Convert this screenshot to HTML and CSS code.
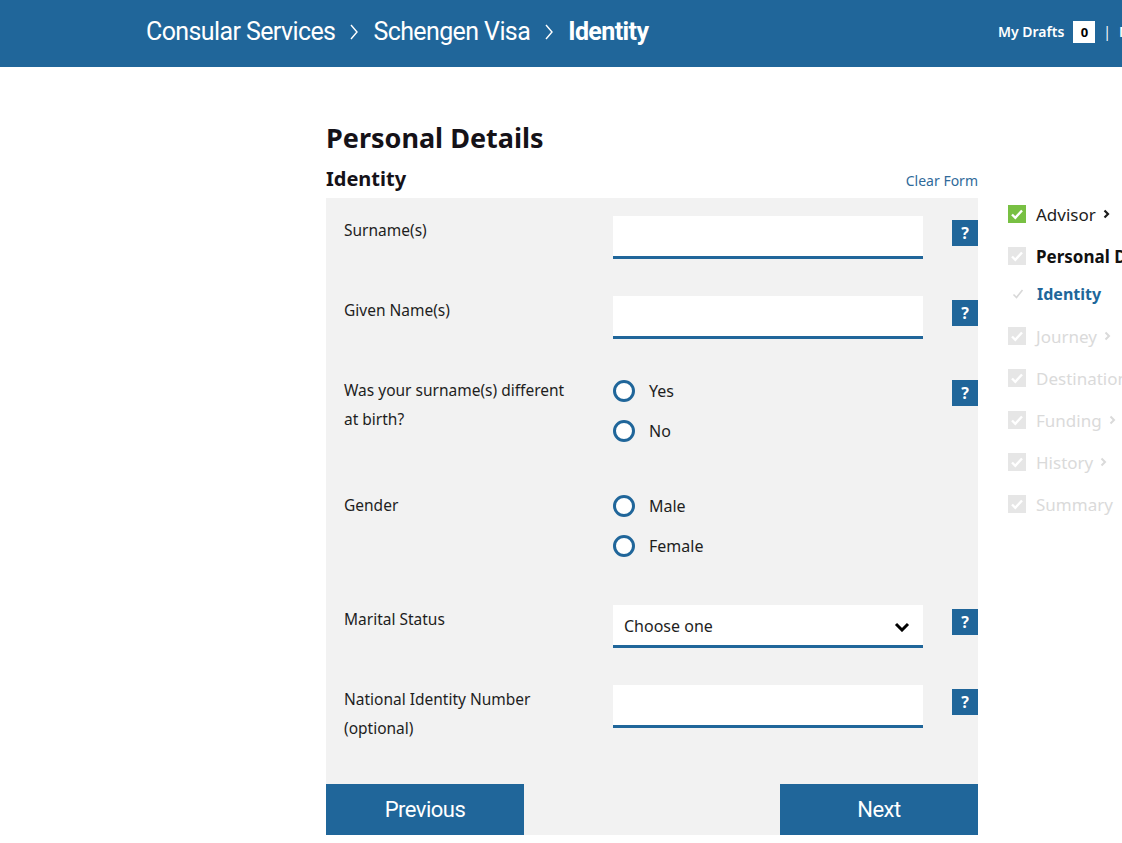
FILE: index.html
```html
<!DOCTYPE html>
<html lang="en">

<head>
    <meta charset="UTF-8">
    <meta name="viewport" content="width=device-width, initial-scale=1.0">
    <title>Identity - Schengen Visa</title>
    <link rel="stylesheet" href="styles.css">
</head>

<body>
    <header class="topbar">
        <nav class="crumbs">
            <a href="#">Consular Services</a>
            <svg class="crumb-sep" width="10" height="18" viewBox="0 0 10 18"><path d="M2 2l6 7-6 7" fill="none" stroke="#fff" stroke-width="1.4"/></svg>
            <a href="#">Schengen Visa</a>
            <svg class="crumb-sep" width="10" height="18" viewBox="0 0 10 18"><path d="M2 2l6 7-6 7" fill="none" stroke="#fff" stroke-width="1.4"/></svg>
            <strong>Identity</strong>
        </nav>
        <div class="account">
            <a href="#">My Drafts</a>
            <span class="count">0</span>
            <span class="divider">|</span>
            <a href="#">My Account</a>
        </div>
    </header>

    <main class="page">
        <section class="form-col">
            <h1>Personal Details</h1>
            <div class="form-head">
                <h2>Identity</h2>
                <a href="#" class="clear-link">Clear Form</a>
            </div>

            <form class="panel" id="identityForm">
                <div class="fields">
                    <div class="row">
                        <label for="surname">Surname(s)</label>
                        <div class="field"><input type="text" id="surname" name="surname"></div>
                        <button type="button" class="help">?</button>
                    </div>
                    <div class="row">
                        <label for="given">Given Name(s)</label>
                        <div class="field"><input type="text" id="given" name="given"></div>
                        <button type="button" class="help">?</button>
                    </div>
                    <div class="row">
                        <label>Was your surname(s) different at birth?</label>
                        <div class="radios">
                            <label class="radio"><input type="radio" name="birthname" value="yes"><span>Yes</span></label>
                            <label class="radio"><input type="radio" name="birthname" value="no"><span>No</span></label>
                        </div>
                        <button type="button" class="help">?</button>
                    </div>
                    <div class="row">
                        <label>Gender</label>
                        <div class="radios">
                            <label class="radio"><input type="radio" name="gender" value="m"><span>Male</span></label>
                            <label class="radio"><input type="radio" name="gender" value="f"><span>Female</span></label>
                        </div>
                    </div>
                    <div class="row">
                        <label for="marital">Marital Status</label>
                        <div class="field select-wrap">
                            <select id="marital" name="marital">
                                <option value="">Choose one</option>
                                <option>Single</option>
                                <option>Married</option>
                                <option>Divorced</option>
                                <option>Widowed</option>
                            </select>
                            <svg class="select-arrow" width="16" height="10" viewBox="0 0 16 10"><path d="M2 2l6 6 6-6" fill="none" stroke="#000" stroke-width="3"/></svg>
                        </div>
                        <button type="button" class="help">?</button>
                    </div>
                    <div class="row">
                        <label for="nin">National Identity Number (optional)</label>
                        <div class="field"><input type="text" id="nin" name="nin"></div>
                        <button type="button" class="help">?</button>
                    </div>
                </div>
                <div class="actions">
                    <button type="button" class="btn">Previous</button>
                    <button type="submit" class="btn">Next</button>
                </div>
            </form>
        </section>

        <aside class="steps">
            <ul>
                <li class="step done">
                    <svg class="tick-box" width="18" height="18" viewBox="0 0 18 18"><rect width="18" height="18" fill="#78c043"/><path d="M4 9.5l3.3 3.3L14 5.5" fill="none" stroke="#fff" stroke-width="2.4"/></svg>
                    Advisor
                    <svg class="more" width="7" height="10" viewBox="0 0 7 10"><path d="M1.5 1.5l3.5 3.5-3.5 3.5" fill="none" stroke="currentColor" stroke-width="2.2"/></svg>
                </li>
                <li class="step current">
                    <svg class="tick-box" width="18" height="18" viewBox="0 0 18 18"><rect width="18" height="18" fill="#e6e6e6"/><path d="M4 9.5l3.3 3.3L14 5.5" fill="none" stroke="#fff" stroke-width="2.4"/></svg>
                    Personal Details
                </li>
                <li class="substep">
                    <svg class="tick" width="12" height="12" viewBox="0 0 12 12"><path d="M1.5 6.5l3 3L10.5 2" fill="none" stroke="#d8d8d8" stroke-width="1.6"/></svg>
                    Identity
                </li>
                <li class="step todo">
                    <svg class="tick-box" width="18" height="18" viewBox="0 0 18 18"><rect width="18" height="18" fill="#e6e6e6"/><path d="M4 9.5l3.3 3.3L14 5.5" fill="none" stroke="#fff" stroke-width="2.4"/></svg>
                    Journey
                    <svg class="more" width="7" height="10" viewBox="0 0 7 10"><path d="M1.5 1.5l3.5 3.5-3.5 3.5" fill="none" stroke="currentColor" stroke-width="2"/></svg>
                </li>
                <li class="step todo">
                    <svg class="tick-box" width="18" height="18" viewBox="0 0 18 18"><rect width="18" height="18" fill="#e6e6e6"/><path d="M4 9.5l3.3 3.3L14 5.5" fill="none" stroke="#fff" stroke-width="2.4"/></svg>
                    Destination
                    <svg class="more" width="7" height="10" viewBox="0 0 7 10"><path d="M1.5 1.5l3.5 3.5-3.5 3.5" fill="none" stroke="currentColor" stroke-width="2"/></svg>
                </li>
                <li class="step todo">
                    <svg class="tick-box" width="18" height="18" viewBox="0 0 18 18"><rect width="18" height="18" fill="#e6e6e6"/><path d="M4 9.5l3.3 3.3L14 5.5" fill="none" stroke="#fff" stroke-width="2.4"/></svg>
                    Funding
                    <svg class="more" width="7" height="10" viewBox="0 0 7 10"><path d="M1.5 1.5l3.5 3.5-3.5 3.5" fill="none" stroke="currentColor" stroke-width="2"/></svg>
                </li>
                <li class="step todo">
                    <svg class="tick-box" width="18" height="18" viewBox="0 0 18 18"><rect width="18" height="18" fill="#e6e6e6"/><path d="M4 9.5l3.3 3.3L14 5.5" fill="none" stroke="#fff" stroke-width="2.4"/></svg>
                    History
                    <svg class="more" width="7" height="10" viewBox="0 0 7 10"><path d="M1.5 1.5l3.5 3.5-3.5 3.5" fill="none" stroke="currentColor" stroke-width="2"/></svg>
                </li>
                <li class="step todo">
                    <svg class="tick-box" width="18" height="18" viewBox="0 0 18 18"><rect width="18" height="18" fill="#e6e6e6"/><path d="M4 9.5l3.3 3.3L14 5.5" fill="none" stroke="#fff" stroke-width="2.4"/></svg>
                    Summary
                </li>
            </ul>
        </aside>
    </main>
</body>

</html>
```

FILE: styles.css
```css
html,
body {
    overflow: hidden;
}

body {
    margin: 0;
    background-color: #ffffff;
    color: #1c1c1c;
    font-family: "Noto Sans", "Open Sans", sans-serif;
    font-size: 16px;
}

/* top bar with breadcrumb */
.topbar {
    box-sizing: border-box;
    display: flex;
    align-items: center;
    height: 67px;
    padding: 0 0 4px 146px;
    background-color: #20669a;
    color: #ffffff;
    white-space: nowrap;
}

.crumbs {
    flex: 0 0 852px;
    display: flex;
    align-items: center;
    gap: 14px;
    font-family: "Roboto", sans-serif;
    font-size: 25px;
    letter-spacing: -0.6px;
}

.crumbs a {
    color: #ffffff;
    text-decoration: none;
}

.crumbs strong {
    font-weight: bold;
}

.account {
    display: flex;
    align-items: center;
    font-size: 14px;
    font-weight: 600;
}

.account a {
    color: #ffffff;
    text-decoration: none;
}

.account .count {
    width: 22px;
    height: 22px;
    margin-left: 9px;
    background-color: #ffffff;
    color: #000000;
    font-size: 13px;
    font-weight: bold;
    line-height: 22px;
    text-align: center;
}

.account .divider {
    margin: 0 8px;
    font-weight: normal;
}

/* page body */
.page {
    display: grid;
    grid-template-columns: 652px auto;
    column-gap: 30px;
    padding: 53px 0 0 326px;
    white-space: nowrap;
}

h1 {
    margin: 0;
    font-size: 27px;
    line-height: 36px;
    color: #151218;
}

.form-head {
    display: flex;
    justify-content: space-between;
    align-items: baseline;
    margin: 8px 0 4px;
}

h2 {
    margin: 0;
    font-size: 20px;
    line-height: 30px;
    color: #151218;
}

.clear-link {
    font-size: 14px;
    color: #2f6a9a;
    text-decoration: none;
}

.panel {
    background-color: #f2f2f2;
}

.fields {
    padding: 18px 0 4px 18px;
}

.row {
    display: grid;
    grid-template-columns: 269px 310px 1fr;
    align-items: start;
    margin-bottom: 37px;
    white-space: normal;
}

.row > label {
    padding-right: 40px;
    font-size: 15.5px;
    line-height: 29px;
    color: #1e1e1e;
}

.field input,
.field select {
    box-sizing: border-box;
    display: block;
    width: 100%;
    height: 43px;
    margin: 0;
    padding: 0 11px;
    border: none;
    border-bottom: 3px solid #20669a;
    border-radius: 0;
    background-color: #ffffff;
    font-family: inherit;
    font-size: 16px;
    color: #1e1e1e;
    outline: none;
}

.select-wrap {
    position: relative;
}

.field select {
    appearance: none;
    -webkit-appearance: none;
    padding-top: 2px;
}

.select-arrow {
    position: absolute;
    right: 13px;
    top: 17px;
    pointer-events: none;
}

.help {
    justify-self: end;
    width: 26px;
    height: 26px;
    margin-top: 4px;
    padding: 0;
    border: none;
    background-color: #20669a;
    color: #ffffff;
    font-family: inherit;
    font-size: 16px;
    font-weight: bold;
    line-height: 26px;
    cursor: pointer;
}

.radios {
    display: flex;
    flex-direction: column;
    gap: 10px;
    padding-bottom: 7.5px;
}

.radio {
    display: flex;
    align-items: center;
    gap: 14px;
    height: 30px;
    color: #1e1e1e;
}

.radio input {
    appearance: none;
    -webkit-appearance: none;
    box-sizing: border-box;
    width: 22px;
    height: 22px;
    margin: 0;
    border: 3px solid #20669a;
    border-radius: 50%;
    background-color: #ffffff;
}

.actions {
    display: flex;
    justify-content: space-between;
}

.btn {
    width: 198px;
    height: 51px;
    border: none;
    background-color: #20669a;
    color: #ffffff;
    font-family: "Roboto", sans-serif;
    font-size: 22px;
    letter-spacing: -0.5px;
    cursor: pointer;
}

/* progress list on the right */
.steps ul {
    list-style: none;
    margin: 73px 0 0;
    padding: 0;
}

.step,
.substep {
    display: flex;
    align-items: center;
    height: 42px;
    font-size: 17px;
}

.step .tick-box {
    margin-right: 10px;
}

.step .more {
    margin-left: 7px;
}

.done {
    color: #1c1c1c;
}

.current {
    font-weight: bold;
    color: #111111;
}

.substep {
    box-sizing: border-box;
    height: 38px;
    padding: 0 0 5px 4px;
    font-size: 16px;
    font-weight: bold;
    color: #20669a;
}

.substep .tick {
    margin-right: 13px;
}

.todo {
    color: #dadada;
}
```
